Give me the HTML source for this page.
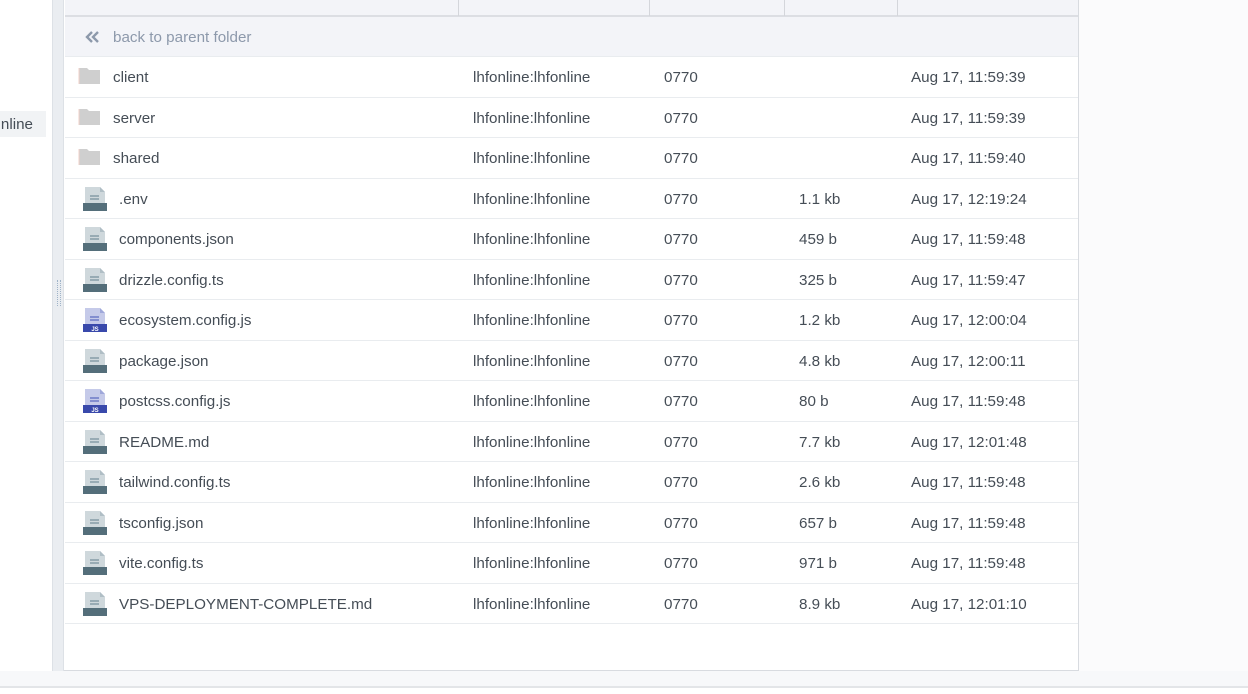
<!DOCTYPE html>
<html><head><style>
*{margin:0;padding:0;box-sizing:border-box}
body{width:1248px;height:694px;overflow:hidden;background:#fff;font-family:"Liberation Sans",Roboto,sans-serif;position:relative;color:#454d56}
.abs{position:absolute}
.row{position:absolute;left:65px;width:1013px;height:40.5px;border-bottom:1px solid #e9ecef;font-size:15.2px;line-height:42px}
.row span{position:absolute;top:0;white-space:nowrap}
</style></head><body>
<div class="abs" style="left:0;top:0;width:52px;height:671px;background:#fff"></div>
<div class="abs" style="left:0;top:111px;width:46px;height:26px;background:#f1f3f5;font-size:15.2px;line-height:27px;color:#454d56;overflow:hidden"><span style="position:absolute;right:13px">nline</span></div>
<div class="abs" style="left:52px;top:0;width:12px;height:671px;background:#eaedf1;border-left:1px solid #dde1e6;border-right:1px solid #dde1e6"></div>
<div class="abs" style="left:57px;top:280px;width:4px;height:26px;border-left:1px dotted #9fb3c8;border-right:1px dotted #9fb3c8"></div>
<div class="abs" style="left:1078px;top:0;width:1px;height:671px;background:#d8dbe0"></div>
<div class="abs" style="left:1079px;top:0;width:169px;height:671px;background:#fbfbfc"></div>
<div class="abs" style="left:64px;top:670px;width:1015px;height:1px;background:#d8dbe0"></div>
<div class="abs" style="left:0;top:671px;width:1248px;height:17px;background:#f7f8fa;border-bottom:2px solid #e3e5e8"></div>
<div class="abs" style="left:65px;top:0;width:1013px;height:17px;background:#f3f4f8;border-bottom:2px solid #dcdee3"></div>
<div class="abs" style="left:458px;top:0;width:1px;height:16px;background:#d4d6db"></div>
<div class="abs" style="left:649px;top:0;width:1px;height:16px;background:#d4d6db"></div>
<div class="abs" style="left:784px;top:0;width:1px;height:16px;background:#d4d6db"></div>
<div class="abs" style="left:897px;top:0;width:1px;height:16px;background:#d4d6db"></div>
<div class="abs" style="left:65px;top:17px;width:1013px;height:40px;background:#f3f4f8;border-bottom:1px solid #e9ecef;font-size:15.2px;line-height:42px;color:#8d99ab">
<svg style="position:absolute;left:19px;top:13px" width="16" height="14" viewBox="0 0 16 14"><path d="M8 2L3 7l5 5M14 2L9 7l5 5" fill="none" stroke="#8d99ab" stroke-width="2.4"/></svg>
<span style="position:absolute;left:48px">back to parent folder</span></div>
<div id="rows"></div>
<script>
var d=[["client","","Aug 17, 11:59:39",0],["server","","Aug 17, 11:59:39",0],["shared","","Aug 17, 11:59:40",0],
[".env","1.1 kb","Aug 17, 12:19:24",1],["components.json","459 b","Aug 17, 11:59:48",1],["drizzle.config.ts","325 b","Aug 17, 11:59:47",1],
["ecosystem.config.js","1.2 kb","Aug 17, 12:00:04",2],["package.json","4.8 kb","Aug 17, 12:00:11",1],["postcss.config.js","80 b","Aug 17, 11:59:48",2],
["README.md","7.7 kb","Aug 17, 12:01:48",1],["tailwind.config.ts","2.6 kb","Aug 17, 11:59:48",1],["tsconfig.json","657 b","Aug 17, 11:59:48",1],
["vite.config.ts","971 b","Aug 17, 11:59:48",1],["VPS-DEPLOYMENT-COMPLETE.md","8.9 kb","Aug 17, 12:01:10",1]];
var h="";
d.forEach(function(r,i){
var top=57+i*40.5;var ic;
if(r[3]==0)ic='<svg style="position:absolute;left:13px;top:9px" width="24" height="20" viewBox="0 0 24 20"><path d="M1 2h8l2 2h11v14H1z" fill="#cfcfcf"/><path d="M1 2v16" stroke="#f2d0c8" stroke-width="1"/></svg>';
else{var c=r[3]==2;ic='<svg style="position:absolute;left:17px;top:7px" width="26" height="26" viewBox="0 0 26 26"><path d="M3 1h15l5 5v13H3z" fill="'+(c?'#c5cae9':'#cfd8dc')+'"/><path d="M18 1v5h5" fill="'+(c?'#9fa8da':'#b0bec5')+'"/><path d="M8 10h9M8 13h9" stroke="'+(c?'#5c6bc0':'#78909c')+'" stroke-width="1.2"/><rect x="1" y="17" width="24" height="8" fill="'+(c?'#3949ab':'#546e7a')+'"/>'+(c?'<text x="13" y="24" font-size="6" font-weight="bold" fill="#fff" text-anchor="middle" font-family="Liberation Sans">JS</text>':'')+'</svg>';}
h+='<div class="row" style="top:'+top+'px">'+ic+'<span style="left:'+(r[3]==0?48:54)+'px">'+r[0]+'</span><span style="left:408px">lhfonline:lhfonline</span><span style="left:599px">0770</span><span style="left:734px">'+r[1]+'</span><span style="left:846px">'+r[2]+'</span></div>';
});
document.getElementById("rows").innerHTML=h;
</script>
</body></html>
